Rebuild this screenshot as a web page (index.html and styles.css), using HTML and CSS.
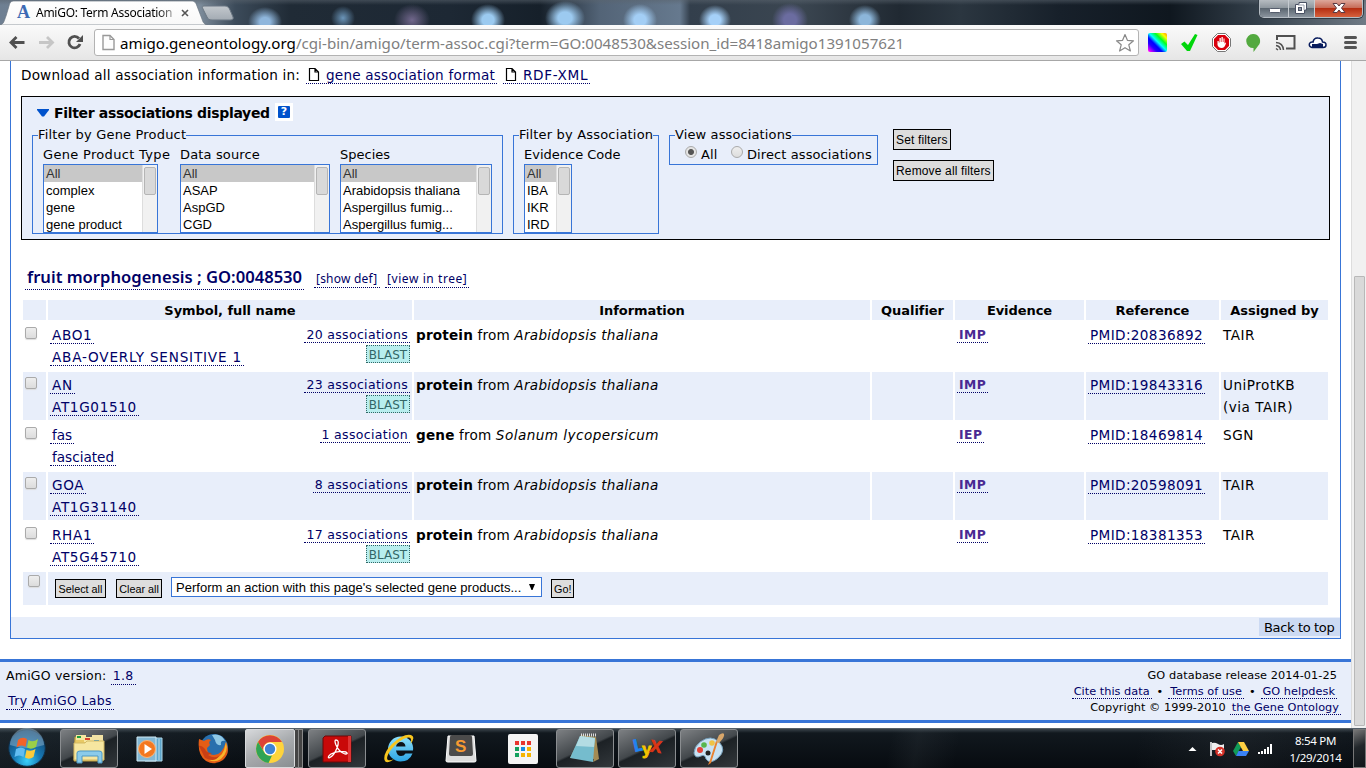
FILE: index.html
```html
<!DOCTYPE html>
<html lang="en">
<head>
<meta charset="utf-8">
<title>AmiGO: Term Associations</title>
<link rel="stylesheet" href="styles.css">
</head>
<body>
<div class="screen">
  <header class="titlebar">
    <svg class="tabshape" width="240" height="25" viewBox="0 0 240 25">
      <defs><linearGradient id="tb" x1="0" y1="0" x2="0" y2="1"><stop offset="0" stop-color="#fff"/><stop offset="1" stop-color="#f8f8f8"/></linearGradient>
      <linearGradient id="nt" x1="0" y1="0" x2="0" y2="1"><stop offset="0" stop-color="#c3c8cd"/><stop offset="1" stop-color="#a3abb3"/></linearGradient></defs>
      <path d="M0 25C4 24 4 21 6 16L9 6C10 2 11 1 15 1H191C195 1 196 3 197 6L202 19C203 23 205 25 208 25Z" fill="url(#tb)" stroke="#69747f" stroke-width=".7"/>
      <path d="M204 6H225C228 6 229 8 230 10L233 17C234 19 232 20 230 20H212C209 20 208 19 207 17L203 9C202 7 202 6 204 6Z" fill="url(#nt)" stroke="#6b7783"/>
    </svg>
    <div class="tab"><span class="fav">A</span><span class="tabname">AmiGO: Term Association</span>
      <svg class="x" width="8" height="8" viewBox="0 0 8 8"><path d="M1 1L7 7M7 1L1 7" stroke="#555" stroke-width="1.6"/></svg></div>
    <div class="winctl">
      <span class="wb"><svg width="28" height="17"><rect x="9.500" y="8.500" width="11" height="4" rx="1" fill="#fff" stroke="#555d6c"/></svg></span>
      <span class="wb wmid"><svg width="26" height="17"><path d="M10 2.500H17.500V10H15.500V13.500H6.500V4.500H10Z" fill="#fff" stroke="#4a5264"/><rect x="9.500" y="7.500" width="3" height="3" fill="#8d95a3" stroke="#4a5264"/><path d="M9 5H15V10" fill="none" stroke="#9aa1ae"/></svg></span>
      <span class="wb wclose"><svg width="46" height="17"><path d="M18 3.500H22L24 6L26 3.500H30L26.500 8L30 12.500H26L24 10L22 12.500H18L21.500 8Z" fill="#fff" stroke="#5a3b44"/></svg></span>
    </div>
  </header>
  <div class="toolbar">
    <svg class="nav" width="94" height="35" viewBox="2 0 94 35">
      <path d="M26.500 17.500H13.500M18.500 12L13 17.500L18.500 23" fill="none" stroke="#505050" stroke-width="2.800"/>
      <path d="M41 17.500H54M49 12L54.500 17.500L49 23" fill="none" stroke="#c6c6c6" stroke-width="2.800"/>
      <path d="M81 13.500A5.700 5.700 0 1 0 82 19" fill="none" stroke="#505050" stroke-width="2.800"/><path d="M85 10V17H78Z" fill="#505050"/>
    </svg>
    <div class="omni">
      <svg class="doc" width="13" height="17" viewBox="0 0 13 17"><path d="M1 1.500H8L12 5.500V15.500H1Z" fill="#fdfdfd" stroke="#999" stroke-width="1.400"/><path d="M8 1.500V5.500H12" fill="none" stroke="#999" stroke-width="1.200"/></svg>
      <span class="url"><span class="host">amigo.geneontology.org</span>/cgi-bin/amigo/term-assoc.cgi?term=GO:0048530&amp;session_id=8418amigo1391057621</span>
      <svg class="star" width="20" height="20" viewBox="0 0 20 20"><path d="M10 1.500L12.400 7.300L18.500 7.800L13.800 11.800L15.400 18L10 14.700L4.600 18L6.200 11.800L1.500 7.800L7.600 7.300Z" fill="#fff" stroke="#888" stroke-width="1.200" stroke-linejoin="round"/></svg>
    </div>
    <svg class="exts" width="226" height="35" viewBox="1140 25 226 35">
      <defs><linearGradient id="rb" x1="0" y1="1" x2="1" y2="0"><stop offset=".05" stop-color="#f0f"/><stop offset=".25" stop-color="#20f"/><stop offset=".38" stop-color="#00f"/><stop offset=".52" stop-color="#0ff"/><stop offset=".68" stop-color="#0f2"/><stop offset=".85" stop-color="#ff0"/><stop offset="1" stop-color="#f80"/></linearGradient></defs>
      <rect x="1148" y="33" width="19" height="19" rx="2" fill="url(#rb)"/>
      <path d="M1181 44L1184.500 41.500L1188 45L1195 34L1197.500 35L1190 51H1187Z" fill="#00d60b"/>
      <path d="M1217.500 33.500H1225.500L1230.500 38.500V46.500L1225.500 51.500H1217.500L1212.500 46.500V38.500Z" fill="#fff" stroke="#777"/>
      <path d="M1218 35H1225L1229 39V46L1225 50H1218L1214 46V39Z" fill="#d9000d"/>
      <path d="M1217.500 41V45Q1218.500 48 1221.500 48Q1225 48 1226 43L1225 42.500L1224.500 44V38.500H1223.500V42H1222.800V37H1221.500V42H1220.800V38H1219.500V42.500H1218.700V41Z" fill="#fff"/>
      <path d="M1253 34A7 7 0 0 1 1258 46L1253.500 52V48A7 7 0 0 1 1253 34Z" fill="#53a93f"/>
      <path d="M1277 40V36H1294.500V48.500H1286" fill="none" stroke="#505050" stroke-width="2"/>
      <path d="M1276 42.500Q1283 43 1283.500 50M1276 45.500Q1280 46 1280.500 50M1276 48.500L1278 50" fill="none" stroke="#505050" stroke-width="1.500"/>
      <path d="M1312 47.500Q1308.500 46.500 1309.500 43.500Q1310.500 41.500 1313 42Q1314 37.500 1318 38Q1322 38 1322.500 42Q1326 42 1326 45Q1326 47.500 1323 47.500Z" fill="#fff" stroke="#081b5c" stroke-width="1.500"/><path d="M1312 44H1317L1320 43L1323 44V48H1312Z" fill="#081b5c"/>
      <path d="M1345.500 37.500H1355.500M1345.500 42.500H1355.500M1345.500 47.500H1355.500" stroke="#555" stroke-width="3" stroke-linecap="round"/>
    </svg>
  </div>
  <div class="viewport">
    <main class="page">
      <section class="frame">
        <p class="dl"><span class="dltext">Download all association information in:</span>
          <a class="lnk d1"><svg width="12" height="15" viewBox="0 0 12 15"><path d="M1.500 1.500H7L10.500 5V13.500H1.500ZM7 1.500V5H10.500" fill="#fff" stroke="#000" stroke-width="1.200"/></svg><span>gene association format</span></a>
          <a class="lnk d2"><svg width="12" height="15" viewBox="0 0 12 15"><path d="M1.500 1.500H7L10.500 5V13.500H1.500ZM7 1.500V5H10.500" fill="#fff" stroke="#000" stroke-width="1.200"/></svg><span>RDF-XML</span></a></p>
        <div class="filter">
          <h2 class="fh"><svg width="12" height="8"><path d="M0 0H12V1L7 7.500H5L0 1Z" fill="#0052cc"/></svg><span class="fht">Filter associations displayed</span><span class="help"><i>?</i></span></h2>
          <div class="fsrow">
            <fieldset class="fs f1"><legend>Filter by Gene Product</legend>
              <div class="sel s1"><label>Gene Product Type</label><div class="list"><ul><li class="on">All</li><li>complex</li><li>gene</li><li>gene product</li></ul><b></b></div></div>
              <div class="sel s2"><label>Data source</label><div class="list"><ul><li class="on">All</li><li>ASAP</li><li>AspGD</li><li>CGD</li></ul><b></b></div></div>
              <div class="sel s3"><label>Species</label><div class="list"><ul><li class="on">All</li><li>Arabidopsis thaliana</li><li>Aspergillus fumig...</li><li>Aspergillus fumig...</li></ul><b></b></div></div>
            </fieldset>
            <fieldset class="fs f2"><legend>Filter by Association</legend>
              <div class="sel s4"><label>Evidence Code</label><div class="list"><ul><li class="on">All</li><li>IBA</li><li>IKR</li><li>IRD</li></ul><b></b></div></div>
            </fieldset>
            <fieldset class="fs f3"><legend>View associations</legend>
              <span class="radio checked"></span><span class="rl r1">All</span><span class="radio"></span><span class="rl">Direct associations</span>
            </fieldset>
            <div class="fbtns"><button class="btn">Set filters</button><button class="btn">Remove all filters</button></div>
          </div>
        </div>
        <div class="term"><a class="lnk tname">fruit morphogenesis ; GO:0048530</a><a class="lnk small t1">[show def]</a><a class="lnk small t2">[view in tree]</a></div>
        <table class="assoc">
          <colgroup><col class="c1"><col class="c2"><col class="c3"><col class="c4"><col class="c5"><col class="c6"><col class="c7"></colgroup>
          <tr class="hd"><th></th><th>Symbol, full name</th><th>Information</th><th>Qualifier</th><th>Evidence</th><th>Reference</th><th>Assigned by</th></tr>
          <tr class="row"><td><span class="cb"></span></td><td><div class="sym"><div class="lt"><a class="lnk">ABO1</a><a class="lnk long">ABA-OVERLY SENSITIVE 1</a></div><div class="rt"><a class="lnk">20 associations</a><a class="blast">BLAST</a></div></div></td><td><b>protein</b> from <i>Arabidopsis thaliana</i></td><td></td><td><a class="lnk ev">IMP</a></td><td><a class="lnk ref">PMID:20836892</a></td><td class="by">TAIR</td></tr>
          <tr class="row alt"><td><span class="cb"></span></td><td><div class="sym"><div class="lt"><a class="lnk">AN</a><a class="lnk">AT1G01510</a></div><div class="rt"><a class="lnk">23 associations</a><a class="blast">BLAST</a></div></div></td><td><b>protein</b> from <i>Arabidopsis thaliana</i></td><td></td><td><a class="lnk ev">IMP</a></td><td><a class="lnk ref">PMID:19843316</a></td><td class="by">UniProtKB<br>(via TAIR)</td></tr>
          <tr class="row"><td><span class="cb"></span></td><td><div class="sym"><div class="lt lower"><a class="lnk">fas</a><a class="lnk">fasciated</a></div><div class="rt"><a class="lnk">1 association</a></div></div></td><td><b>gene</b> from <i class="wide">Solanum lycopersicum</i></td><td></td><td><a class="lnk ev">IEP</a></td><td><a class="lnk ref">PMID:18469814</a></td><td class="by">SGN</td></tr>
          <tr class="row alt"><td><span class="cb"></span></td><td><div class="sym"><div class="lt"><a class="lnk">GOA</a><a class="lnk">AT1G31140</a></div><div class="rt"><a class="lnk">8 associations</a></div></div></td><td><b>protein</b> from <i>Arabidopsis thaliana</i></td><td></td><td><a class="lnk ev">IMP</a></td><td><a class="lnk ref">PMID:20598091</a></td><td class="by">TAIR</td></tr>
          <tr class="row"><td><span class="cb"></span></td><td><div class="sym"><div class="lt"><a class="lnk">RHA1</a><a class="lnk">AT5G45710</a></div><div class="rt"><a class="lnk">17 associations</a><a class="blast">BLAST</a></div></div></td><td><b>protein</b> from <i>Arabidopsis thaliana</i></td><td></td><td><a class="lnk ev">IMP</a></td><td><a class="lnk ref">PMID:18381353</a></td><td class="by">TAIR</td></tr>
          <tr class="act alt"><td><span class="cb"></span></td><td colspan="6"><div class="acts"><button class="btn sm b1">Select all</button><button class="btn sm b2">Clear all</button><div class="dd"><span>Perform an action with this page's selected gene products...</span><svg width="6" height="7"><path d="M0 0H6L3.500 6H2.500Z" fill="#000"/></svg></div><button class="btn sm b3">Go!</button></div></td></tr>
        </table>
        <div class="top"><a>Back to top</a></div>
      </section>
      <footer class="foot">
        <div class="fl"><p>AmiGO version: <a class="lnk v">1.8</a></p><p><a class="lnk labs">Try AmiGO Labs</a></p></div>
        <div class="fr"><p class="g1">GO database release 2014-01-25</p><p class="g2"><a class="lnk">Cite this data</a><span>•</span><a class="lnk">Terms of use</a><span>•</span><a class="lnk">GO helpdesk</a></p><p class="g3"><span>Copyright © 1999-2010</span><a class="lnk">the Gene Ontology</a></p></div>
      </footer>
    </main>
    <div class="scroll"><span></span></div>
  </div>
  <div class="taskbar">
    <svg class="start" width="60" height="40" viewBox="0 728 60 40">
      <defs><radialGradient id="orb" cx=".5" cy=".85" r=".8"><stop offset="0" stop-color="#3ad0fb"/><stop offset=".45" stop-color="#1678b4"/><stop offset="1" stop-color="#15456f"/></radialGradient></defs>
      <circle cx="27" cy="748" r="18.300" fill="url(#orb)" stroke="#112e46"/><path d="M10 745A17 17 0 0 1 44 745Q27 751 10 745Z" fill="#9fc0d8" opacity=".45"/>
      <path d="M18 740Q22 736 27 739L25.500 747Q21 744 16.500 747.500Z" fill="#f2632a"/><path d="M28.500 740Q33 743 38 739L36 747Q31 750 27 747.500Z" fill="#9bcf48"/><path d="M16 749Q21 746 25 749L23.500 757Q19 754 14.500 757Z" fill="#62bdf2"/><path d="M26.500 750Q31 752 35.500 749L33.500 757Q29 760 25 757.500Z" fill="#fccb3b"/>
    </svg>
    <span class="tk w58 run"><svg width="34" height="32" viewBox="0 0 34 32"><path d="M3 4H12L14 7H29L31 28H2Z" fill="#e8c964" stroke="#b89b42"/><path d="M4 2H14V7H4Z" fill="#f6e6a0"/><path d="M5 3H9V5H5Z" fill="#1f9e3f"/><path d="M12 4H23V9H12Z" fill="#f6e6a0"/><path d="M13 5H18V7H13Z" fill="#d8402c"/><path d="M20 2H31V11H20Z" fill="#f2e2a4"/><path d="M22 7H27V9H22Z" fill="#2e8fd0"/><path d="M2 10H13L15 8H32V27H2Z" fill="#f6e6a0" stroke="#d3b964"/><path d="M5 30V20Q5 18 8 18H27Q30 18 30 20V30H26V23H10V30Z" fill="#8bcbea" stroke="#4c98c5"/></svg></span>
    <span class="tk w62 wmp"><svg width="28" height="28" viewBox="0 0 28 28"><path d="M9 3H26V26H9Z" fill="#5ea6cb" stroke="#b2d8e8"/><path d="M1 2H20V26H1Z" fill="#84b8d4" stroke="#d0eaf5"/><path d="M23 4V25" stroke="#c1dfed"/><circle cx="11" cy="14" r="8.500" fill="#f47820" stroke="#f9b67b"/><path d="M8.500 9L16 14L8.500 19Z" fill="#fff"/></svg></span>
    <span class="tk w65"><svg width="32" height="32" viewBox="0 0 32 32"><circle cx="17" cy="15" r="14" fill="#286fad"/><path d="M15 2Q24 0 28 8Q23 7 24 12Q19 13 18 7Z" fill="#8fc8e5"/><path d="M2 6L7 8Q11 5 14 7Q11 9 13 12L10 15Q10 22 17 22Q25 22 29 9Q34 20 26 27Q18 33 9 28Q0 22 2 6Z" fill="#e45d15"/><path d="M29 9Q32 19 24 26Q18 30 12 27Q24 26 27 17Z" fill="#f9b52c"/><path d="M2 13Q4 12 8 16Q9 20 15 20L11 22Q17 26 22 23Q18 30 8 25Z" fill="#c83f15"/></svg></span>
    <span class="tk chromebtn"><svg width="30" height="30" viewBox="0 0 30 30"><circle cx="15" cy="15" r="14" fill="#ffd43c"/><path d="M3 8A14 14 0 0 1 27 8H15A7 7 0 0 0 8.500 17Z" fill="#dc4335"/><path d="M3 8L9 18A7 7 0 0 0 17 21.500L13.500 29A14 14 0 0 1 3 8Z" fill="#30a455"/><circle cx="15" cy="15" r="6.500" fill="#fff"/><circle cx="15" cy="15" r="5.200" fill="#3f83d4"/></svg></span><span class="stack"></span><span class="stack s"></span>
    <span class="tk w58 run adobe"><svg width="31" height="30" viewBox="0 0 31 30"><path d="M1 4L3 2H29V28H1Z" fill="#c90909" stroke="#6d0909"/><path d="M26 2H29V28H26Z" fill="#df3333"/><path d="M14 6Q18 6 15 14Q12 22 7 24Q5 23 9 20Q16 16 24 18Q27 20 23 20Q17 18 14 11Q12 6 14 6Z" fill="none" stroke="#fff" stroke-width="1.300"/></svg></span>
    <span class="tk w62 iebtn"><svg width="34" height="34" viewBox="0 0 34 34"><defs><linearGradient id="ieg" x1="0" y1="0" x2="0" y2="1"><stop offset="0" stop-color="#8fe0fb"/><stop offset="1" stop-color="#2ba4e4"/></linearGradient></defs><path d="M18.500 4.500A12 12 0 0 1 31 18.500H14Q15 24 19 24Q22 24 23.500 21.500H30.500Q27.500 29.500 18.500 29.500A12.500 12.500 0 0 1 18.500 4.500ZM14 14.500H23.500Q23 10 19 10Q15 10 14 14.500Z" fill="url(#ieg)"/><path d="M12 27Q4 33 2.500 28Q1 21 10 12Q22 1 29 3Q34 5 28.500 12Q30.500 5 26 5.500Q18 7 9.500 17Q3 26 6 28Q8 29 12 27Z" fill="#f7c51e"/></svg></span>
    <span class="tk w62"><svg width="32" height="30" viewBox="0 0 32 30"><path d="M3 2H29L31 27Q31 28 29 28H3Q1 28 1 27Z" fill="#ddd" stroke="#fff"/><path d="M5 3Q5 1 7 1H25Q27 1 27 3L28 20Q28 22 26 22H6Q4 22 4 20Z" fill="#4b4b4b"/><text x="10" y="18" class="subl">S</text></svg></span>
    <span class="tk w62"><svg width="30" height="30" viewBox="0 0 30 30"><rect width="30" height="30" rx="2" fill="#f4f4f4"/><g fill="#e8352e"><path d="M7 7h4v4H7zM13 7h4v4h-4zM19 7h4v4h-4z"/></g><path d="M7 13h4v4H7zM7 19h4v4H7z" fill="#12a05d"/><path d="M13 13h4v4h-4z" fill="#168be4"/><path d="M19 13h4v4h-4zM19 19h4v4h-4zM13 19h4v4h-4z" fill="#f5b400"/></svg></span>
    <span class="tk w58 run g4 note"><svg width="34" height="34" viewBox="0 0 34 34"><path d="M13 3L28 5L31 27L25 30L26 27L2 26Z" fill="#a48b53"/><path d="M12 4L27 6L25 30L2 26Z" fill="#75bccd"/><path d="M12 4L27 6L26 15L8 14Z" fill="#b3dce3"/><path d="M13 3H28" stroke="#ddd" stroke-width="3" stroke-dasharray="1 1"/></svg></span>
    <span class="tk w58 run g4"><svg width="34" height="30" viewBox="0 0 34 30"><text class="lyx" x="4" y="17" fill="#2183f0" stroke="#2183f0" transform="rotate(-12 8 14)">L</text><text class="lyx" x="12" y="21" fill="#f5c400" stroke="#f5c400">y</text><text class="lyx" x="20" y="18" fill="#db3515" stroke="#db3515" transform="rotate(8 24 15)">X</text></svg></span>
    <span class="tk w58 run g4"><svg width="34" height="34" viewBox="0 0 34 34"><path d="M8 10Q19 2 27 10Q35 18 26 26Q18 33 14 27Q13 22 9 24Q3 27 2 21Q2 15 8 10Z" fill="#c8e2f3" stroke="#749db9"/><circle cx="8" cy="18" r="3" fill="#e44339"/><circle cx="12" cy="13" r="2.800" fill="#57b74e"/><circle cx="20" cy="11" r="2.800" fill="#efc345"/><circle cx="16" cy="21" r="2.500" fill="#222"/><path d="M26 9L19 31L16 33L18 28L24 9Z" fill="#e98230"/><path d="M24 10L27 3Q31 0 32 2Q33 5 27 11Z" fill="#d8a66a"/></svg></span>
    <div class="tray">
      <svg width="92" height="24" viewBox="1186 737 92 24"><path d="M1188.500 751L1192.500 747L1196.500 751Z" fill="#fff"/>
      <path d="M1211 742V756" stroke="#fff" stroke-width="1.500"/><path d="M1212 743Q1215 742 1218 744Q1221 746 1224 744V750H1212Z" fill="#eee"/><circle cx="1220" cy="751.500" r="4.800" fill="#d43128"/><path d="M1218 749.500L1222 753.500M1222 749.500L1218 753.500" stroke="#fff" stroke-width="1.500"/>
      <path d="M1238 742L1233 751L1236 756L1241 747Z" fill="#119b58"/><path d="M1238 742H1244L1249 751H1243Z" fill="#ffcf42"/><path d="M1238.500 751H1249L1246 756H1236Z" fill="#3b82f4"/>
      <path d="M1259 754V752M1262 754V751M1265 754V749M1268 754V747M1271 754V744" stroke="#fff" stroke-width="2"/></svg>
      <div class="clock">8:54 PM<br>1/29/2014</div><span class="desk"></span>
    </div>
  </div>
</div>
</body>
</html>
```
FILE: styles.css
```css
* { box-sizing: border-box; }
body { margin: 0; overflow: hidden; background: #fff; }
p, h2, ul, fieldset { margin: 0; padding: 0; }
svg { display: block; flex: none; }
.screen { width: 1366px; height: 768px; display: flex; flex-direction: column; overflow: hidden; font: 13px "DejaVu Sans", sans-serif; color: #000; }

/* window title bar */
.titlebar { height: 25px; flex: none; position: relative; display: flex; justify-content: space-between;
  background:
    radial-gradient(ellipse 17px 15px at 265px 22px, #8fb6dc 30%, transparent),
    radial-gradient(ellipse 12px 12px at 343px 18px, #6b95b9, transparent),
    radial-gradient(ellipse 18px 16px at 412px 20px, #71678c, transparent),
    radial-gradient(ellipse 17px 16px at 488px 20px, #9bcaf0 35%, transparent),
    radial-gradient(ellipse 20px 17px at 565px 18px, #9ccaf0 35%, transparent),
    radial-gradient(ellipse 17px 16px at 640px 20px, #a3cef5 35%, transparent),
    radial-gradient(ellipse 16px 15px at 715px 20px, #a5d0f8 35%, transparent),
    radial-gradient(ellipse 18px 17px at 790px 20px, #6b6ca0 35%, transparent),
    radial-gradient(ellipse 16px 15px at 865px 20px, #8cb6da 35%, transparent),
    linear-gradient(rgba(90,100,110,.55), transparent 5px),
    linear-gradient(90deg, #6e7f92 0, #7c8b9a 200px, #3c4b5a 235px, #202b36 290px, #1d2834 450px, #16202a 540px, #536477 600px, #66798e 680px, #333f4c 690px, #3b4651 800px, #202932 900px, #2b3640 960px, #17202a 1060px, #0f171f 1170px, #34404b 1260px, #707b86 1366px); }
.tabshape { position: absolute; left: 0; top: 0; }
.tab { position: relative; display: flex; align-items: center; width: 200px; height: 25px; padding-left: 17px; }
.fav { font: bold 18px "Liberation Serif", serif; color: #3d6ab4; width: 19px; }
.tabname { font: 12px "Noto Sans", sans-serif; letter-spacing: -.27px; width: 139px; white-space: nowrap; overflow: hidden; -webkit-mask: linear-gradient(90deg, #000 120px, rgba(0,0,0,.3)); }
.x { margin-left: 6px; }
.winctl { display: flex; height: 18px; margin-right: 3px; border: 1px solid #b5bdc4; border-top: 0; border-radius: 0 0 5px 5px; overflow: hidden; box-shadow: 0 0 0 1px #323c46; }
.wb { display: block; width: 28px; height: 17px; background: linear-gradient(#b6bcc1, #8f989f 45%, #5c6771 50%, #8a949e); }
.wmid { width: 27px; border-left: 1px solid #c5cbd0; border-right: 1px solid #c5cbd0; }
.wclose { width: 47px; background: linear-gradient(#dda79b, #c76d59 45%, #b52e12 50%, #d6613d); }

/* browser toolbar */
.toolbar { height: 36px; flex: none; display: flex; border-bottom: 1px solid #a7a7a7; background: linear-gradient(#fafafa, #e6e6e6); }
.nav { width: 94px; }
.omni { width: 1045px; height: 27px; margin-top: 4px; display: flex; align-items: center; border: 1px solid #b3b3b3; border-radius: 3px; background: #fff; padding: 0 3px 0 7px; }
.url { flex: 1; margin-left: 5px; font: 15.14px/24px "Noto Sans", sans-serif; color: #808080; white-space: nowrap; }
.host { color: #000; }
.exts { margin-left: 1px; }

/* page */
.viewport { height: 667px; flex: none; display: flex; }
.page { width: 1351px; }
.frame { width: 1331px; height: 578px; margin-left: 10px; border: 1px solid #3875d7; border-top: 0; display: flex; flex-direction: column; }
.lnk { display: inline-flex; color: #000066; border-bottom: 1px dotted #000066; padding: 0 2px; white-space: nowrap; }
.dl { display: flex; height: 35px; flex: none; padding: 5px 0 0 10px; white-space: nowrap; font-size: 13.6px; letter-spacing: .16px; }
.dl .lnk, .dltext { height: 18px; line-height: 18px; }
.dltext { width: 285px; }
.d1 { width: 191px; margin-right: 6px; letter-spacing: .2px; }
.d2 { width: 87px; letter-spacing: .65px; }
.dl svg { margin: 1px 6px 0 0; }
.filter { width: 1309px; height: 144px; flex: none; margin-left: 10px; border: 1px solid #000; background: #e8eefa; }
.fh { display: flex; height: 31px; padding: 6px 0 0 15px; line-height: 20px; }
.fh svg { margin-top: 6px; }
.fht { width: 221px; flex: none; margin-left: 5px; white-space: nowrap; font-size: 14px; letter-spacing: -.33px; }
.help { width: 18px; height: 18px; background: #fff; padding: 3px; }
.help i { display: block; width: 12px; height: 12px; border-radius: 1px; background: #0052cc; color: #fff; font: bold 11px/12px "DejaVu Sans", sans-serif; text-align: center; }
.fsrow { display: flex; align-items: flex-start; padding-left: 10px; }
.fs { border: 1px solid #3875d7; position: relative; display: flex; height: 106px; min-width: 0; margin-right: 10px; padding-left: 10px; white-space: nowrap; }
legend { height: 14px; line-height: 14px; padding: 0; margin-left: -5px; letter-spacing: .18px; }
.f1 { width: 471px; } .f2 { width: 146px; } .f3 { width: 209px; height: 37px; padding-left: 15px; }
.f3 legend { margin-left: -10px; letter-spacing: .12px; }
.sel label { display: block; height: 22px; line-height: 26px; }
.list { display: flex; height: 69px; border: 1px solid #3875d7; background: #fff; }
.s1 { width: 137px; letter-spacing: .32px; } .s1 .list { width: 115px; }
.s2 { width: 160px; letter-spacing: .15px; } .s2 .list { width: 150px; }
.s3 .list { width: 152px; } .s4 .list { width: 48px; }
.list ul { flex: 1; list-style: none; font: 13px/17px "Liberation Sans", sans-serif; letter-spacing: 0; }
.list li { padding-left: 2px; height: 17px; }
.list .on { background: #c8c8c8; color: #333; }
.list b { width: 15px; background: #f1f1f1; border-left: 1px solid #ddd; padding: 2px 2px 2px 1px; }
.list b::before { content: ""; display: block; width: 10px; height: 26px; border: 1px solid #b5b5b5; border-radius: 2px; background: #d9d9d9; }
.radio { width: 12px; height: 12px; margin-top: 4px; border: 1px solid #aaa; border-radius: 50%; background: linear-gradient(#eee, #ddd); }
.checked { background: radial-gradient(circle, #555 2.5px, #e4e4e4 3.5px); }
.rl { line-height: 26px; margin-left: 4px; letter-spacing: .1px; }
.r1 { width: 30px; }
.fbtns { display: flex; flex-direction: column; align-items: flex-start; gap: 10px; margin: 1px 0 0 5px; }
.btn { display: block; height: 21px; border: 1px solid #000; border-radius: 0; background: #ddd; color: #000; padding: 0 2px; white-space: nowrap; font: 12px "Liberation Sans", sans-serif; }
.fbtns .btn { letter-spacing: .15px; }
.term { display: flex; height: 58px; flex: none; padding: 28px 0 0 14px; color: #000066; }
.tname { width: 279px; height: 22px; font: 600 16.6px/18px "Noto Sans", sans-serif; }
.small { font: 12px/20px "Noto Sans", sans-serif; height: 19px; margin-top: 1px; }
.t1 { width: 66px; margin-left: 10px; letter-spacing: .2px; } .t2 { width: 84px; margin-left: 5px; letter-spacing: .57px; }
.assoc { width: 1309px; flex: none; margin-left: 10px; table-layout: fixed; border-spacing: 2px; border-collapse: separate; }
.c1 { width: 23px; } .c2 { width: 364px; } .c3 { width: 456px; } .c4 { width: 81px; } .c5 { width: 129px; } .c6 { width: 133px; } .c7 { width: 107px; }
.assoc td, .assoc th { padding: 0; vertical-align: top; white-space: nowrap; }
.assoc .hd th { height: 20px; background: #e8eefa; line-height: 19px; padding-top: 1px; font-size: 13px; letter-spacing: -.06px; }
.assoc .row td { height: 48px; line-height: 22px; padding: 2px 2px 0; font-size: 13.6px; }
.assoc .row td:nth-child(3) { letter-spacing: .17px; }
.row i { letter-spacing: .28px; }
.row .wide { letter-spacing: .45px; }
.assoc .row .by { letter-spacing: .5px; }
.alt td { background: #e8eefa; }
.cb { display: block; width: 12px; height: 12px; margin: 3px 0 0; border: 1px solid #aaa; border-radius: 2px; background: linear-gradient(#eee, #dcdcdc); box-shadow: 0 1px 1px #ddd; }
.sym { display: flex; justify-content: space-between; }
.sym > div { display: flex; flex-direction: column; align-items: flex-start; gap: 4px; padding-top: 2px; }
.sym .lnk { height: 18px; line-height: 18px; }
.lt { letter-spacing: .65px; }
.sym .lower { letter-spacing: 0; }
.lt .long { letter-spacing: .8px; }
.sym .rt { align-items: flex-end; gap: 2px; padding-top: 1px; font-size: 12.5px; letter-spacing: .33px; }
.sym .rt .lnk { line-height: 20px; }
.blast { height: 18px; line-height: 18px; width: 44px; text-align: center; font-size: 12px; letter-spacing: 0; color: #336666; background: #b8eeee; border: 1px dotted #336666; }
.ev { font-weight: bold; color: #4a2a92; font-size: 12.3px; letter-spacing: .45px; height: 18px; line-height: 20px; margin-top: 1px; vertical-align: top; }
.ref { height: 18px; line-height: 18px; margin-top: 2px; letter-spacing: .37px; vertical-align: top; }
.assoc .act td { height: 33px; padding: 3px 5px 0; }
.act .cb { margin-top: 0; }
.acts { display: flex; align-items: flex-start; padding: 2px 0 0 2px; }
.sm { height: 19px; font-size: 10.8px; margin-top: 2px; }
.b1 { width: 51px; margin-right: 10px; } .b2 { width: 46px; margin-right: 9px; } .b3 { width: 23px; }
.dd { display: flex; justify-content: space-between; width: 371px; height: 20px; margin-right: 9px; border: 1px solid #3875d7; background: #fff; padding: 0 6px 0 4px; font: 13px/19px "Liberation Sans", sans-serif; letter-spacing: .03px; }
.dd svg { margin-top: 6px; }
.top { height: 21px; flex: none; margin-top: 10px; background: #e8eefa; display: flex; justify-content: flex-end; padding-top: 1px; }
.top a { width: 81px; height: 18px; line-height: 20px; padding-left: 5px; background: #ccdaf3; white-space: nowrap; letter-spacing: -.35px; }
.foot { height: 64px; margin-top: 20px; border-top: 3px solid #3875d7; border-bottom: 3px solid #3875d7; background: #e8eefa; display: flex; justify-content: space-between; padding: 5px 10px 0 6px; line-height: 18px; }
.fl { font-size: 12.5px; letter-spacing: .2px; }
.fl p { height: 25px; white-space: nowrap; }
.fl .lnk { line-height: 16px; letter-spacing: .35px; }
.fr { font-size: 11.3px; letter-spacing: .02px; text-align: right; line-height: 16px; white-space: nowrap; padding-top: 1px; }
.fr p { height: 16px; display: flex; justify-content: flex-end; }
.fr .lnk { height: 15px; line-height: 16px; }
.fr .g1 { padding-right: 4px; letter-spacing: .06px; } .g2 { padding-right: 4px; gap: 5px; } .g3 { gap: 4px; }
.scroll { width: 15px; background: #f1f1f1; border-left: 1px solid #ddd; padding: 215px 0 0 2px; }
.scroll span { display: block; width: 11px; height: 450px; border: 1px solid #b8b8b8; border-radius: 1px; background: #d9d9d9; }

/* taskbar */
.taskbar { height: 40px; flex: none; display: flex; border-top: 1px solid #555f68; background: linear-gradient(100deg, rgba(80,100,110,.18), transparent 20%, transparent 65%, rgba(90,100,105,.12) 67%, transparent 70%, transparent 83%, rgba(100,105,110,.12) 90%, transparent), linear-gradient(#39434a, #11181e 4px, #070b10); }
.start { margin-top: -1px; }
.tk { display: flex; align-items: center; justify-content: center; height: 39px; flex: none; }
.w58 { width: 58px; } .w62 { width: 62px; } .w65 { width: 65px; }
.wmp { padding-left: 2px; }
.run { border: 1px solid #8a8d90; border-radius: 3px; background: linear-gradient(155deg, #7d8083, #42474b 48%, #1c2125 52%, #32373b); }
.chromebtn { width: 50px; border: 1px solid #d8dadc; border-radius: 2px; background: linear-gradient(155deg, #d7d9db, #a7aaad 50%, #8a8e91); }
.stack { width: 4px; border: 1px solid #888; border-left: 0; background: #444; }
.adobe { margin-left: 5px; }
.iebtn { margin-left: 2px; }
.g4 { margin-left: 4px; }
.note { margin-left: 2px; }
.subl { font: bold 17px "Liberation Sans", sans-serif; fill: #f79a31; }
.lyx { font: bold 17px "Liberation Sans", sans-serif; stroke-width: .8px; }
.tray { margin-left: auto; display: flex; align-items: flex-start; }
.tray svg { margin-top: 8px; }
.clock { width: 75px; padding-top: 3px; text-align: center; color: #fff; font: 11.5px/17px "Noto Sans", sans-serif; letter-spacing: -.3px; }
.desk { width: 13px; height: 39px; border: 1px solid #777; background: linear-gradient(155deg, #777, #22272b 45%, #11161a); }
```
